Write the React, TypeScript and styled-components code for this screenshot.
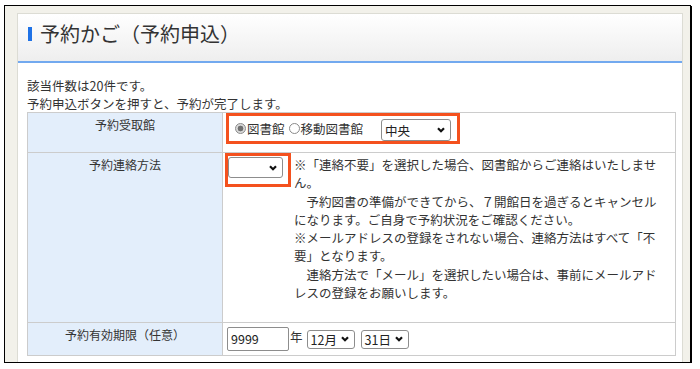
import React from 'react';
import styled, { createGlobalStyle } from 'styled-components';

const GlobalStyle = createGlobalStyle`
  html, body {
    margin: 0;
    padding: 0;
    background: #fff;
  }
  body {
    font-family: "Noto Sans CJK JP", "Noto Sans", sans-serif;
    color: #333;
  }
`;

const Frame = styled.div`
  box-sizing: border-box;
  margin: 5px 0 0 4px;
  width: 687px;
  height: 358px;
  border: 1px solid #000;
  box-shadow: 1px 1px 0 #000;
  background: #f2f1ea;
  padding: 7px 7px 0 12px;
  display: flex;
  overflow: hidden;
`;

const Panel = styled.div`
  flex: 1;
  display: flex;
  flex-direction: column;
  background: #fff;
  border: 1px solid #dcdcd4;
  border-bottom: none;
`;

const Header = styled.div`
  box-sizing: border-box;
  height: 49px;
  padding: 8px 0 0 10px;
  background: linear-gradient(#ffffff, #eeeeee);
  border-bottom: 2px solid #72a9ef;
`;

const TitleRow = styled.div`
  display: flex;
  align-items: center;
  gap: 8px;
  height: 24px;
`;

const TitleBar = styled.span`
  width: 4px;
  height: 14px;
  background: #1f72e6;
`;

const Title = styled.h1`
  margin: 0;
  font-size: 20px;
  line-height: 24px;
  font-weight: normal;
  color: #333;
`;

const Body = styled.div`
  padding: 14px 6px 0 9px;
`;

const Intro = styled.p`
  margin: 0;
  font-size: 12.5px;
  line-height: 17.5px;
`;

const FormGrid = styled.div`
  display: grid;
  grid-template-columns: 195px 453px;
  grid-template-rows: 40px 170px 33px;
  border-top: 1px solid #cccccc;
  border-left: 1px solid #cccccc;
  width: fit-content;
`;

const Label = styled.div`
  box-sizing: border-box;
  background: #e3eefb;
  border-right: 1px solid #cccccc;
  border-bottom: 1px solid #cccccc;
  text-align: center;
  font-size: 12px;
  line-height: 16px;
  padding-top: 4px;
`;

const Value = styled.div<{ $pad?: string; $align?: string }>`
  box-sizing: border-box;
  border-right: 1px solid #cccccc;
  border-bottom: 1px solid #cccccc;
  display: flex;
  align-items: ${(p) => p.$align || 'flex-start'};
  padding: ${(p) => p.$pad || '0'};
`;

const Highlight = styled.div<{ $w: number; $h: number; $ml: number; $align: string; $pad: string }>`
  box-sizing: border-box;
  display: flex;
  align-items: ${(p) => p.$align};
  width: ${(p) => p.$w}px;
  height: ${(p) => p.$h}px;
  margin-left: ${(p) => p.$ml}px;
  padding: ${(p) => p.$pad};
  border: 3px solid #f4511e;
  flex-shrink: 0;
`;

const RadioGroup = styled.div`
  display: flex;
  align-items: center;
  align-self: center;
  margin: 0 14px 0 0;
  font-size: 12.5px;
  line-height: 16px;
`;

const RadioItem = styled.label`
  display: inline-flex;
  align-items: center;
  margin-right: 4px;
  white-space: nowrap;
`;

const RadioDot = styled.span<{ $checked?: boolean }>`
  box-sizing: border-box;
  width: 11px;
  height: 11px;
  border-radius: 50%;
  border: 1px solid #8a8a8a;
  margin-right: 1px;
  background: ${(p) =>
    p.$checked ? 'radial-gradient(circle, #6f6f6f 0 2.6px, #d9d9d9 3.2px)' : '#fff'};
`;

const Select = styled.div<{ $w: number; $h: number; $ml?: number; $mt?: number }>`
  box-sizing: border-box;
  display: inline-flex;
  align-items: center;
  justify-content: space-between;
  flex-shrink: 0;
  width: ${(p) => p.$w}px;
  height: ${(p) => p.$h}px;
  margin-left: ${(p) => p.$ml || 0}px;
  margin-top: ${(p) => p.$mt || 0}px;
  padding: 0 5px 0 3px;
  border: 1px solid #8d8d8d;
  border-radius: 3px;
  background: #fff;
  font-size: 12.5px;
  color: #222;
  white-space: nowrap;
`;

const Notes = styled.div`
  margin: 3px 0 0 3px;
  font-size: 12.5px;
  line-height: 18.3px;
  white-space: pre;
`;

const YearInput = styled.div`
  box-sizing: border-box;
  width: 62px;
  height: 24px;
  border: 1px solid #8d8d8d;
  border-radius: 2px;
  padding-left: 3px;
  font-size: 12.5px;
  line-height: 22px;
  color: #222;
`;

const Unit = styled.span`
  font-size: 12.5px;
  margin: 0 4px 0 1px;
`;

const Chevron = () => (
  <svg width="8" height="6" viewBox="0 0 8 6">
    <path d="M1 1.2 L4 4.2 L7 1.2" stroke="#111" strokeWidth="2.2" fill="none" />
  </svg>
);

const notes = [
  '※「連絡不要」を選択した場合、図書館からご連絡はいたしませ',
  'ん。',
  '\u3000予約図書の準備ができてから、７開館日を過ぎるとキャンセル',
  'になります。ご自身で予約状況をご確認ください。',
  '※メールアドレスの登録をされない場合、連絡方法はすべて「不',
  '要」となります。',
  '\u3000連絡方法で「メール」を選択したい場合は、事前にメールアド',
  'レスの登録をお願いします。',
].join('\n');

export default function App() {
  return (
    <>
      <GlobalStyle />
      <Frame>
        <Panel>
          <Header>
            <TitleRow>
              <TitleBar />
              <Title>予約かご（予約申込）</Title>
            </TitleRow>
          </Header>
          <Body>
            <Intro>
              該当件数は20件です。
              <br />
              予約申込ボタンを押すと、予約が完了します。
            </Intro>
            <FormGrid>
              <Label>予約受取館</Label>
              <Value>
                <Highlight $w={234} $h={31} $ml={3} $align="flex-end" $pad="0 9px 0 6px">
                  <RadioGroup>
                    <RadioItem>
                      <RadioDot $checked />
                      図書館
                    </RadioItem>
                    <RadioItem>
                      <RadioDot />
                      移動図書館
                    </RadioItem>
                  </RadioGroup>
                  <Select $w={70} $h={22}>
                    中央
                    <Chevron />
                  </Select>
                </Highlight>
              </Value>

              <Label>予約連絡方法</Label>
              <Value>
                <Highlight $w={66} $h={34} $ml={2} $align="flex-start" $pad="1px 0 0 0">
                  <Select $w={55} $h={21}>
                    <span />
                    <Chevron />
                  </Select>
                </Highlight>
                <Notes>{notes}</Notes>
              </Value>

              <Label>予約有効期限（任意）</Label>
              <Value $pad="4px 0 0 4px">
                <YearInput>9999</YearInput>
                <Unit>年</Unit>
                <Select $w={48} $h={19} $mt={2.5}>
                  12月
                  <Chevron />
                </Select>
                <Select $w={48} $h={19} $ml={6} $mt={2.5}>
                  31日
                  <Chevron />
                </Select>
              </Value>
            </FormGrid>
          </Body>
        </Panel>
      </Frame>
    </>
  );
}
